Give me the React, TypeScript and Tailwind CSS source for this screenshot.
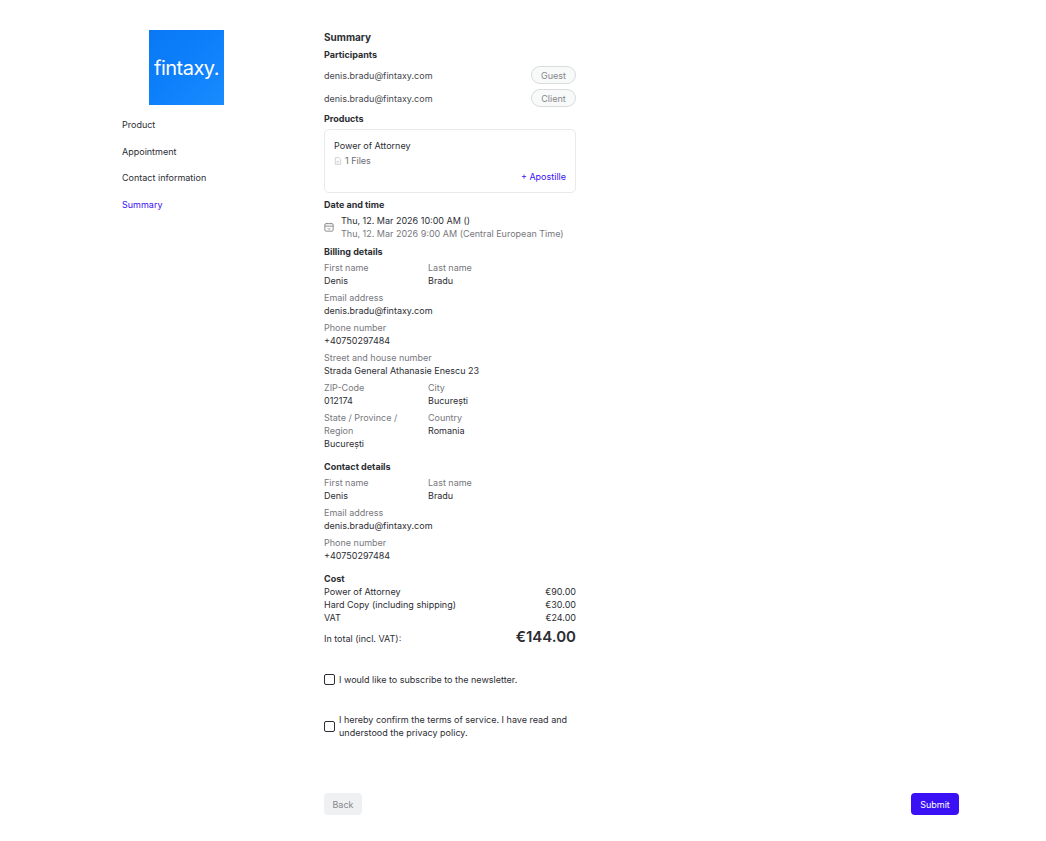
const font = { fontFamily: "Inter, 'Liberation Sans', sans-serif" };

function Field({ label, value }: { label: string; value: string }) {
  return (
    <div className="w-[100px] shrink-0">
      <div className="text-[#77787d] whitespace-nowrap">{label}</div>
      <div className="text-[#2b2d33] whitespace-nowrap">{value}</div>
    </div>
  );
}

function WideField({ label, value }: { label: string; value: string }) {
  return (
    <div>
      <div className="text-[#77787d]">{label}</div>
      <div className="text-[#2b2d33]">{value}</div>
    </div>
  );
}

function Heading({ children }: { children: string }) {
  return <h3 className="font-bold text-[#2b2d33]">{children}</h3>;
}

function Participant({ role }: { role: string }) {
  return (
    <div className="flex items-center justify-between h-[18px]">
      <span className="text-[#45474d]">denis.bradu@fintaxy.com</span>
      <span className="h-[18px] w-[45px] flex items-center justify-center rounded-full border border-[#d9dbdc] bg-[#f8f9f9] text-[#85878b]">
        {role}
      </span>
    </div>
  );
}

function CostRow({ label, value }: { label: string; value: string }) {
  return (
    <div className="flex justify-between text-[#2b2d33]">
      <span>{label}</span>
      <span>{value}</span>
    </div>
  );
}

export default function App() {
  return (
    <div className="min-h-[841px] bg-white text-[9px] leading-[13px] antialiased flex pl-[122px] pt-[30px]" style={font}>
      <aside className="w-[202px] shrink-0">
        <div className="w-[75px] h-[75px] ml-[27px] flex items-center justify-center bg-gradient-to-br from-[#0a78f5] via-[#0d80fb] to-[#1a8cff]">
          <span className="text-white text-[20px] leading-none tracking-[-0.5px]">fintaxy.</span>
        </div>
        <nav className="mt-[13px] flex flex-col gap-[13.5px] text-[#2b2d33]">
          <span>Product</span>
          <span>Appointment</span>
          <span>Contact information</span>
          <span className="text-[#3a10f5]">Summary</span>
        </nav>
      </aside>

      <main className="w-[635px] shrink-0 flex flex-col">
        <div className="w-[252px]">
          <h2 className="text-[10px] font-bold leading-[14px] text-[#2b2d33]">Summary</h2>

          <div className="mt-[4px]"><Heading>Participants</Heading></div>
          <div className="mt-[5px] flex flex-col gap-[5px]">
            <Participant role="Guest" />
            <Participant role="Client" />
          </div>

          <div className="mt-[5px]"><Heading>Products</Heading></div>
          <div className="mt-[4px] h-[64px] border border-[#e8e9ea] rounded-[5px] px-[9px] pt-[9px] flex flex-col">
            <div className="text-[#2b2d33]">Power of Attorney</div>
            <div className="mt-[2px] flex items-center gap-[3px] text-[#6a6c71]">
              <svg width="8" height="8" viewBox="0 0 24 24" fill="none" stroke="#b9bbbd" strokeWidth="2">
                <path d="M4 2h11l5 5v15H4z" />
                <path d="M8 13h8M8 17h5" />
              </svg>
              1 Files
            </div>
            <div className="mt-[3px] text-right text-[#3a10f5]">+ Apostille</div>
          </div>

          <div className="mt-[5px]"><Heading>Date and time</Heading></div>
          <div className="mt-[3px] flex items-center gap-[7px]">
            <svg width="10" height="10" viewBox="0 0 24 24" fill="none" stroke="#77787d" strokeWidth="2">
              <rect x="2" y="4" width="20" height="18" rx="3" />
              <path d="M2 10h20M7 2v3M17 2v3M9 15l3 3 3-3" />
            </svg>
            <div>
              <div className="text-[#2b2d33]">Thu, 12. Mar 2026 10:00 AM ()</div>
              <div className="text-[#77787d]">Thu, 12. Mar 2026 9:00 AM (Central European Time)</div>
            </div>
          </div>

          <div className="mt-[5px]"><Heading>Billing details</Heading></div>
          <div className="mt-[3px] flex flex-col gap-[4px]">
            <div className="flex gap-[4px]">
              <Field label="First name" value="Denis" />
              <Field label="Last name" value="Bradu" />
            </div>
            <WideField label="Email address" value="denis.bradu@fintaxy.com" />
            <WideField label="Phone number" value="+40750297484" />
            <WideField label="Street and house number" value="Strada General Athanasie Enescu 23" />
            <div className="flex gap-[4px]">
              <Field label="ZIP-Code" value="012174" />
              <Field label="City" value="București" />
            </div>
            <div className="flex gap-[4px] items-start">
              <div className="w-[100px] shrink-0">
                <div className="text-[#77787d] w-[90px]">State / Province / Region</div>
                <div className="text-[#2b2d33]">București</div>
              </div>
              <Field label="Country" value="Romania" />
            </div>
          </div>

          <div className="mt-[10px]"><Heading>Contact details</Heading></div>
          <div className="mt-[3px] flex flex-col gap-[4px]">
            <div className="flex gap-[4px]">
              <Field label="First name" value="Denis" />
              <Field label="Last name" value="Bradu" />
            </div>
            <WideField label="Email address" value="denis.bradu@fintaxy.com" />
            <WideField label="Phone number" value="+40750297484" />
          </div>

          <div className="mt-[10px]"><Heading>Cost</Heading></div>
          <CostRow label="Power of Attorney" value="€90.00" />
          <CostRow label="Hard Copy (including shipping)" value="€30.00" />
          <CostRow label="VAT" value="€24.00" />
          <div className="mt-[3px] flex justify-between items-center text-[#2b2d33]">
            <span className="pt-[3px]">In total (incl. VAT):</span>
            <span className="text-[15px] leading-[20px] font-semibold">€144.00</span>
          </div>

          <label className="mt-[26px] flex items-center gap-[4px] text-[#2b2d33]">
            <span className="w-[11px] h-[11px] shrink-0 rounded-[2px] border border-[#2b2d33] bg-white" />
            <span>I would like to subscribe to the newsletter.</span>
          </label>

          <label className="mt-[27px] flex items-center gap-[4px] text-[#2b2d33]">
            <span className="w-[11px] h-[11px] shrink-0 rounded-[2px] border border-[#2b2d33] bg-white" />
            <span>I hereby confirm the terms of service. I have read and understood the privacy policy.</span>
          </label>
        </div>

        <div className="mt-[54px] flex justify-between">
          <button className="w-[38px] h-[22px] rounded-[4px] bg-[#eff0f1] text-[#85878b]">Back</button>
          <button className="w-[48px] h-[22px] rounded-[4px] bg-[#3a10f5] text-white">Submit</button>
        </div>
      </main>
    </div>
  );
}
